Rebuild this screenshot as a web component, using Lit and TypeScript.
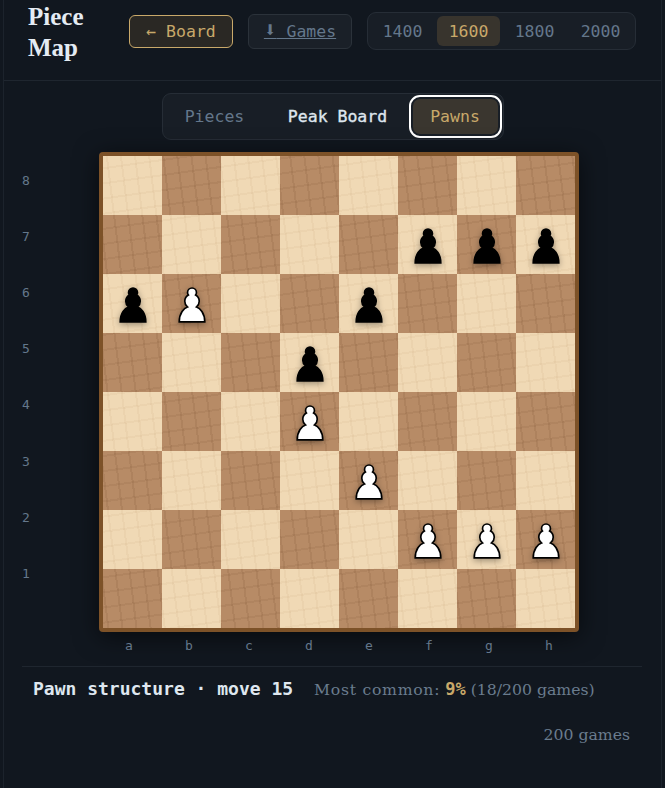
import { LitElement, html, css } from "lit";
import { customElement } from "lit/decorators.js";

const PAWN = "M22.5 9c-2.21 0-4 1.79-4 4 0 .89.29 1.71.78 2.38C17.33 16.5 16 18.59 16 21c0 2.03.94 3.84 2.41 5.03-3 1.06-7.41 5.55-7.41 13.47h23c0-7.92-4.41-12.41-7.41-13.47 1.47-1.19 2.41-3 2.41-5.03 0-2.41-1.33-4.5-3.28-5.62.49-.67.78-1.49.78-2.38 0-2.21-1.79-4-4-4z";

const pieces: Record<string, "b" | "w"> = {
  f7: "b", g7: "b", h7: "b", a6: "b", b6: "w", e6: "b", d5: "b", d4: "w", e3: "w", f2: "w", g2: "w", h2: "w",
};
const files = ["a", "b", "c", "d", "e", "f", "g", "h"];
const ranks = [8, 7, 6, 5, 4, 3, 2, 1];

@customElement("app-root")
export class AppRoot extends LitElement {
  static styles = css`
    :host { display: block; width: 665px; height: 788px; overflow: hidden; background: #11171f; color: #dfe7ef; font-family: "DejaVu Serif", serif; }
    .frame { height: 788px; margin: 0 3px; border-left: 1px solid #1c232c; border-right: 1px solid #1c232c; box-sizing: border-box; }
    header { height: 81px; box-sizing: border-box; border-bottom: 1px solid #1f262f; display: flex; align-items: flex-start; padding: 0 0 0 24px; }
    h1 { margin: 1px 0 0; width: 101px; font: 700 25px/31px "Liberation Serif", serif; color: #e4ebf3; flex: none; }
    .mono { font-family: "DejaVu Sans Mono", monospace; }
    .btn { box-sizing: border-box; height: 33px; margin-top: 15px; border-radius: 6px; border: 1px solid #c9a96a; background: #2a2824; color: #c8a96a; font-size: 16.5px; display: flex; align-items: center; justify-content: center; padding: 0; }
    .board-btn { width: 104px; }
    .games { width: 104px; height: 35px; margin-top: 14px; margin-left: 15px; border-color: #2b323a; background: #1a2028; color: #64778b; }
    .games > span { text-decoration: underline; line-height: 20px; }
    .arrow { font-size: 21px; line-height: 16px; }
    .seg { display: flex; box-sizing: border-box; border: 1px solid #262d36; background: #181e26; border-radius: 9px; }
    .elo { margin: 12px 0 0 15px; width: 269px; height: 38px; padding: 3px 0 3px 3px; }
    .elo div { width: 63px; height: 30px; border-radius: 6px; margin-right: 3px; display: flex; align-items: center; justify-content: center; font-size: 16.5px; color: #64778b; }
    .elo .on { background: #38342d; color: #c8a96a; }
    .tabs-wrap { display: flex; justify-content: center; padding-top: 12px; }
    .tabs { height: 47px; width: 342px; align-items: center; padding-left: 3px; }
    .tab { height: 35px; display: flex; align-items: center; justify-content: center; font-size: 16.5px; color: #64778b; }
    .t1 { width: 98px; }
    .t2 { width: 148px; color: #dfe6ee; -webkit-text-stroke: 0.35px #dfe6ee; }
    .t3 { width: 85px; margin-left: 1px; background: #3a362f; color: #c8a96a; border-radius: 7px; outline: 2px solid #fff; outline-offset: 2px; }
    .main { display: flex; height: 514px; margin-top: 12px; }
    .ranks { width: 95px; display: grid; grid-template-rows: repeat(8, 56.2px); justify-items: center; align-items: center; padding: 0 51px 0 0; box-sizing: border-box; height: 450px; font: 13px "DejaVu Sans Mono", monospace; color: #64778b; }
    .board-col { width: 481px; flex: none; }
    .board { width: 480px; height: 480px; box-sizing: border-box; border: 4px solid #7d5228; border-radius: 4px; display: grid; grid-template: repeat(8, 59px) / repeat(8, 59px); box-shadow: 0 4px 24px rgba(0, 0, 0, 0.6); }
    .sq { display: flex; align-items: center; justify-content: center; background-attachment: fixed; }
    .light {
      background-color: #f0d9b5;
      background-image:
        repeating-linear-gradient(83deg, rgba(150, 100, 50, 0.055) 0 2px, transparent 2px 14px),
        repeating-linear-gradient(172deg, rgba(150, 100, 50, 0.05) 0 2px, transparent 2px 15px);
    }
    .dark {
      background-color: #b78b66;
      background-image:
        repeating-linear-gradient(83deg, rgba(90, 50, 20, 0.1) 0 2px, transparent 2px 14px),
        repeating-linear-gradient(172deg, rgba(90, 50, 20, 0.08) 0 2px, transparent 2px 15px);
    }
    .sq svg { width: 50px; height: 50px; margin-top: -1px; filter: drop-shadow(0 2px 3px rgba(0, 0, 0, 0.35)); }
    .files { display: grid; grid-template-columns: repeat(8, 60px); justify-items: center; padding-top: 6px; font: 13px "DejaVu Sans Mono", monospace; color: #64778b; height: 20px; }
    .rule { margin: 0 19px 0 18px; border-top: 1px solid #1f262f; }
    .summary { display: flex; align-items: baseline; padding: 11px 0 0 29px; white-space: nowrap; }
    .title { font: 700 18px "DejaVu Sans Mono", monospace; color: #dfe7ef; }
    .note { margin-left: 21px; font-size: 15.7px; color: #6a7c8e; }
    .lbl { letter-spacing: 0.7px; }
    .note b { font: 700 17px "DejaVu Sans Mono", monospace; color: #c8a96a; }
    .count { text-align: right; padding: 26px 31px 0 0; font-size: 15.7px; color: #6a7c8e; }
  `;

  render() {
    return html`<div class="frame">
      <header>
        <h1>Piece Map</h1>
        <div class="btn board-btn mono">← Board</div>
        <div class="btn games mono"><span><span class="arrow">⬇</span> Games</span></div>
        <div class="seg elo mono">
          <div>1400</div><div class="on">1600</div><div>1800</div><div>2000</div>
        </div>
      </header>
      <div class="tabs-wrap">
        <div class="seg tabs mono">
          <div class="tab t1">Pieces</div>
          <div class="tab t2">Peak Board</div>
          <div class="tab t3">Pawns</div>
        </div>
      </div>
      <div class="main">
        <div class="ranks">${ranks.map((r) => html`<div>${r}</div>`)}</div>
        <div class="board-col">
          <div class="board">
            ${ranks.map((r, ri) =>
              files.map((f, fi) => {
                const p = pieces[f + r];
                return html`<div class="sq ${(ri + fi) % 2 ? "dark" : "light"}">
                  ${p
                    ? html`<svg viewBox="0 0 45 45"><path d=${PAWN} fill=${p === "b" ? "#000" : "#fff"} stroke="#000" stroke-width="1.5" stroke-linecap="round"/></svg>`
                    : ""}
                </div>`;
              })
            )}
          </div>
          <div class="files">${files.map((f) => html`<div>${f}</div>`)}</div>
        </div>
      </div>
      <div class="rule"></div>
      <div class="summary">
        <span class="title">Pawn structure · move 15</span>
        <span class="note"><span class="lbl">Most common:</span> <b>9%</b> (18/200 games)</span>
      </div>
      <div class="count">200 games</div>
    </div>`;
  }
}
